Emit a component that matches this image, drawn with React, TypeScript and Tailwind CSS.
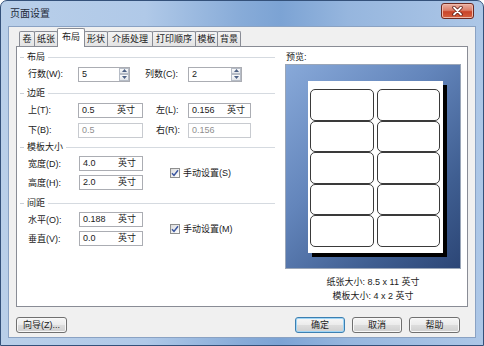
import React from "react";

const F = "font-['Liberation_Sans','Noto_Sans_CJK_SC',sans-serif]";

function GroupHeader({ label, className = "" }: { label: string; className?: string }) {
  return (
    <div className={"flex items-center h-[14px] " + className}>
      <div className="w-[4px] h-px bg-[#c9cfd6]" />
      <span className="px-[3px] leading-[14px]">{label}</span>
      <div className="flex-1 h-px bg-[#d5dae0]" />
    </div>
  );
}

function SpinArrow({ up }: { up?: boolean }) {
  return (
    <div className="flex-1 flex items-center justify-center border border-[#b6bcc6] bg-[linear-gradient(#fbfbfb,#e3e6ea)]">
      <svg width="5" height="3" viewBox="0 0 5 3">
        {up ? <path d="M0 3 L2.5 0 L5 3 Z" fill="#4d6185" /> : <path d="M0 0 L2.5 3 L5 0 Z" fill="#4d6185" />}
      </svg>
    </div>
  );
}

function SpinInput({ value, w }: { value: string; w: string }) {
  return (
    <div className={"h-[15px] border border-[#abadb3] bg-white flex items-stretch " + w}>
      <span className="flex-1 pl-[3px] leading-[13px]">{value}</span>
      <div className="w-[10px] flex flex-col">
        <SpinArrow up />
        <SpinArrow />
      </div>
    </div>
  );
}

function Field({ value, unit, disabled, w = "w-[65px]" }: { value: string; unit?: string; disabled?: boolean; w?: string }) {
  return (
    <div
      className={
        "h-[15px] border bg-white flex items-center pl-[3px] " +
        w +
        (disabled ? " border-[#c8cbd0] text-[#8f8f8f]" : " border-[#abadb3]")
      }
    >
      <span className="w-[35px] leading-[13px]">{value}</span>
      {unit && <span className="leading-[13px]">{unit}</span>}
    </div>
  );
}

function Label({ text, w, className = "" }: { text: string; w: string; className?: string }) {
  return <span className={"shrink-0 leading-[14px] " + w + " " + className}>{text}</span>;
}

function CheckBox({ label }: { label: string }) {
  return (
    <div className="flex items-center gap-[3px]">
      <div className="w-[10px] h-[10px] border border-[#8e8f8f] bg-[linear-gradient(135deg,#dcdcdc,#ffffff)] flex items-center justify-center">
        <svg width="8" height="8" viewBox="0 0 8 8">
          <path d="M1 4.2 L3 6.4 L7 1.2" fill="none" stroke="#3a56a0" strokeWidth="1.5" />
        </svg>
      </div>
      <span className="leading-[14px]">{label}</span>
    </div>
  );
}

function Tab({ label, w, selected }: { label: string; w: string; selected?: boolean }) {
  if (selected) {
    return (
      <div
        className={
          "relative z-10 -mb-px -ml-px h-[19px] border border-b-0 border-[#898c95] bg-white flex items-center justify-center rounded-t-[2px] " +
          w
        }
      >
        <span className="leading-[14px] -mt-[2px]">{label}</span>
      </div>
    );
  }
  return (
    <div
      className={
        "-ml-px h-[15px] border border-b-0 border-[#898c95] bg-[linear-gradient(#f4f4f4,#e3e3e3)] flex items-center justify-center rounded-t-[2px] " +
        w
      }
    >
      <span className="leading-[14px]">{label}</span>
    </div>
  );
}

function Btn({ label, w, def }: { label: string; w: string; def?: boolean }) {
  return (
    <div
      className={
        "h-[16px] rounded-[3px] border flex items-center justify-center bg-[linear-gradient(#f6f6f6_0%,#ebebeb_50%,#dddddd_51%,#cfcfcf_100%)] " +
        w +
        (def ? " border-[#3c7fb1] shadow-[inset_0_0_0_1px_#9fd5f6]" : " border-[#707070] shadow-[inset_0_0_0_1px_#f8f8f8]")
      }
    >
      <span className="leading-[14px]">{label}</span>
    </div>
  );
}

export default function App() {
  const labels = Array.from({ length: 10 });
  return (
    <div
      className={
        "w-[484px] h-[346px] overflow-hidden border border-[#34517a] rounded-t-[7px] text-[9px] text-[#1a1a1a] flex flex-col bg-[linear-gradient(90deg,#b9cfe9_0%,#b0c9e8_30%,#87abd8_50%,#7ca3d4_58%,#96b6de_72%,#adc7e7_100%)] " +
        F
      }
    >
      {/* title bar */}
      <div className="h-[25px] shrink-0 flex items-start">
        <span className="ml-[9px] mt-[6px] text-[10px] leading-[14px] text-[#1e2a3a]">页面设置</span>
        <div className="ml-auto mr-[9px] mt-[2px] w-[33px] h-[16px] rounded-[3px] border border-[#6d2a22] bg-[linear-gradient(#eab1a4_0%,#dc7f6a_45%,#c9442a_55%,#d5603f_100%)] shadow-[inset_0_0_0_1px_#f0b9aa] flex items-center justify-center">
          <svg width="11" height="10" viewBox="0 0 11 10">
            <path d="M2 1.5 L9 8.5 M9 1.5 L2 8.5" stroke="#5b1a14" strokeWidth="3.4" strokeLinecap="round" />
            <path d="M2 1.5 L9 8.5 M9 1.5 L2 8.5" stroke="#ffffff" strokeWidth="1.8" strokeLinecap="round" />
          </svg>
        </div>
      </div>

      {/* client area */}
      <div className="mx-[7px] h-[312px] shrink-0 border border-[#8aa2c3] bg-[#f0f0f0] flex flex-col">
        {/* tabs */}
        <div className="h-[19px] flex items-end pl-[10px]">
          <div className="ml-px" />
          <Tab label="卷" w="w-[16px]" />
          <Tab label="纸张" w="w-[24px]" />
          <Tab label="布局" w="w-[28px]" selected />
          <Tab label="形状" w="w-[24px]" />
          <Tab label="介质处理" w="w-[46px]" />
          <Tab label="打印顺序" w="w-[44px]" />
          <Tab label="模板" w="w-[23px]" />
          <Tab label="背景" w="w-[24px]" />
        </div>

        {/* panel */}
        <div className="mx-[7px] h-[261px] border border-[#898c95] bg-white flex">
          {/* left column */}
          <div className="w-[255px] ml-[3px] pt-[3px] flex flex-col">
            <GroupHeader label="布局" />
            <div className="h-[20px] flex items-center pl-[8px]">
              <Label text="行数(W):" w="w-[50px]" />
              <SpinInput value="5" w="w-[52px]" />
              <Label text="列数(C):" w="w-[43px]" className="ml-[15px]" />
              <SpinInput value="2" w="w-[54px]" />
            </div>

            <GroupHeader label="边距" className="mt-[2px]" />
            <div className="h-[20px] flex items-center pl-[8px]">
              <Label text="上(T):" w="w-[50px]" />
              <Field value="0.5" unit="英寸" />
              <Label text="左(L):" w="w-[32px]" className="ml-[13px]" />
              <Field value="0.156" unit="英寸" w="w-[63px]" />
            </div>
            <div className="h-[20px] flex items-center pl-[8px]">
              <Label text="下(B):" w="w-[50px]" />
              <Field value="0.5" disabled />
              <Label text="右(R):" w="w-[32px]" className="ml-[13px]" />
              <Field value="0.156" disabled w="w-[63px]" />
            </div>

            <GroupHeader label="模板大小" />
            <div className="flex items-center">
              <div className="flex flex-col">
                <div className="h-[19px] flex items-center pl-[8px]">
                  <Label text="宽度(D):" w="w-[51px]" />
                  <Field value="4.0" unit="英寸" w="w-[64px]" />
                </div>
                <div className="h-[19px] flex items-center pl-[8px]">
                  <Label text="高度(H):" w="w-[51px]" />
                  <Field value="2.0" unit="英寸" w="w-[64px]" />
                </div>
              </div>
              <div className="ml-[27px]">
                <CheckBox label="手动设置(S)" />
              </div>
            </div>

            <GroupHeader label="间距" className="mt-[4px]" />
            <div className="flex items-center">
              <div className="flex flex-col">
                <div className="h-[19px] flex items-center pl-[8px]">
                  <Label text="水平(O):" w="w-[51px]" />
                  <Field value="0.188" unit="英寸" w="w-[64px]" />
                </div>
                <div className="h-[19px] flex items-center pl-[8px]">
                  <Label text="垂直(V):" w="w-[51px]" />
                  <Field value="0.0" unit="英寸" w="w-[64px]" />
                </div>
              </div>
              <div className="ml-[27px]">
                <CheckBox label="手动设置(M)" />
              </div>
            </div>
          </div>

          {/* right column */}
          <div className="ml-[10px] w-[176px] pt-[3px] flex flex-col">
            <span className="h-[14px] leading-[14px] pl-px">预览:</span>
            <div className="h-[205px] border border-[#9aa6b8] bg-[linear-gradient(135deg,#88a9d9_0%,#6385bb_40%,#3f5e91_75%,#2c4676_100%)] pt-[16px] pl-[22px]">
              <div className="w-[135px] h-[172px] bg-white shadow-[4px_4px_0_#000] pt-[8px] pl-[2px]">
                <div className="w-[130px] h-[158px] grid grid-cols-2 grid-rows-5 gap-x-[3px]">
                  {labels.map((_, i) => (
                    <div key={i} className="border border-[#3a3a3a] rounded-[5px] bg-white" />
                  ))}
                </div>
              </div>
            </div>
            <div className="mt-[6px] flex flex-col items-center">
              <span className="leading-[14px]">纸张大小: 8.5 x 11 英寸</span>
              <span className="leading-[14px]">模板大小: 4 x 2 英寸</span>
            </div>
          </div>
        </div>

        {/* buttons */}
        <div className="mt-[10px] h-[16px] flex items-center pl-[7px] pr-[15px]">
          <Btn label="向导(Z)..." w="w-[51px]" />
          <div className="flex-1" />
          <Btn label="确定" w="w-[50px]" def />
          <div className="w-[7px]" />
          <Btn label="取消" w="w-[50px]" />
          <div className="w-[7px]" />
          <Btn label="帮助" w="w-[51px]" />
        </div>
      </div>
    </div>
  );
}
